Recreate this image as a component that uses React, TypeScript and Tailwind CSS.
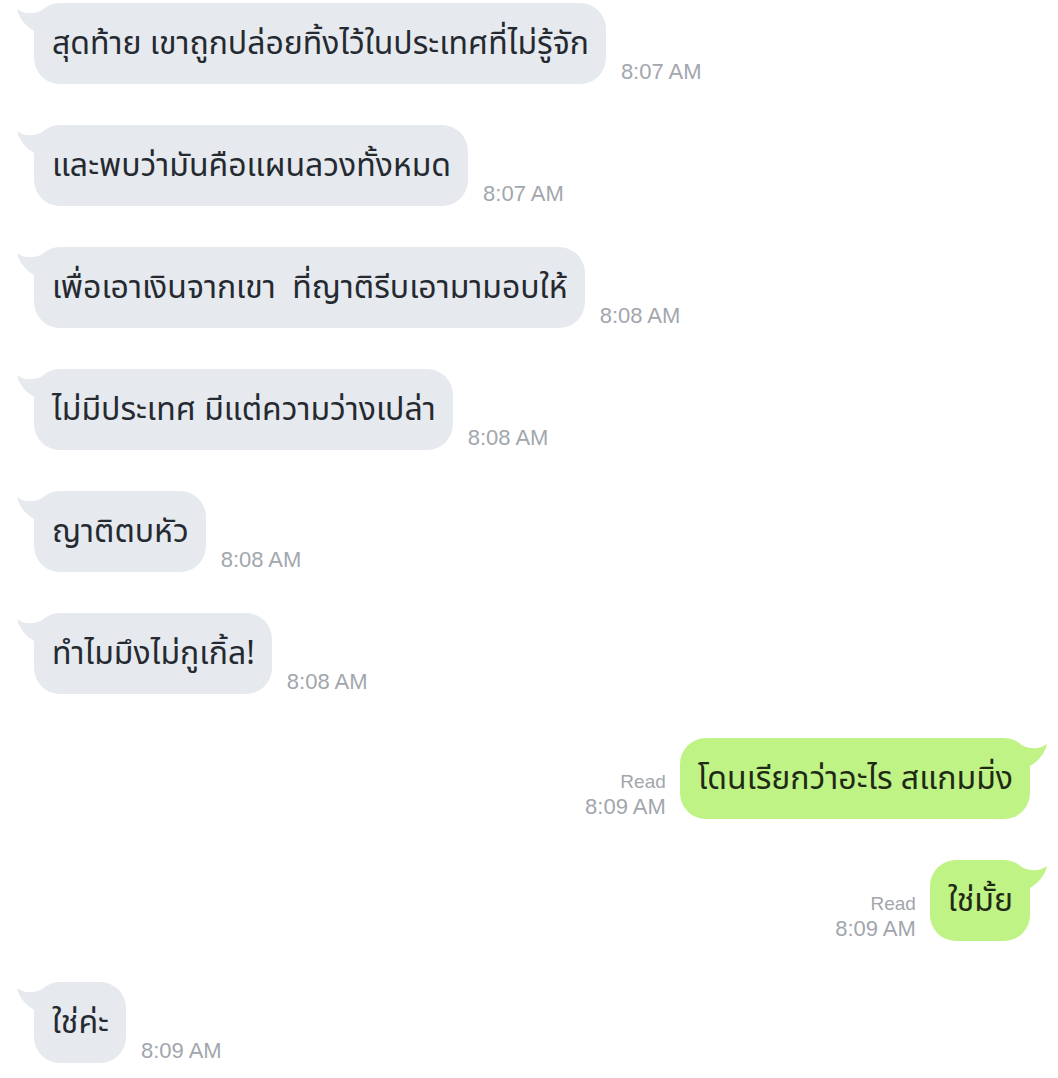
import React from "react";

type Msg = { side: "l" | "r"; text: string; time: string };

const msgs: Msg[] = [
  { side: "l", text: "สุดท้าย เขาถูกปล่อยทิ้งไว้ในประเทศที่ไม่รู้จัก", time: "8:07 AM" },
  { side: "l", text: "และพบว่ามันคือแผนลวงทั้งหมด", time: "8:07 AM" },
  { side: "l", text: "เพื่อเอาเงินจากเขา  ที่ญาติรีบเอามามอบให้", time: "8:08 AM" },
  { side: "l", text: "ไม่มีประเทศ มีแต่ความว่างเปล่า", time: "8:08 AM" },
  { side: "l", text: "ญาติตบหัว", time: "8:08 AM" },
  { side: "l", text: "ทำไมมึงไม่กูเกิ้ล!", time: "8:08 AM" },
  { side: "r", text: "โดนเรียกว่าอะไร สแกมมิ่ง", time: "8:09 AM" },
  { side: "r", text: "ใช่มั้ย", time: "8:09 AM" },
  { side: "l", text: "ใช่ค่ะ", time: "8:09 AM" },
];

function TailLeft({ color }: { color: string }) {
  return (
    <svg className="absolute left-[-17px] top-0" width="30" height="40" viewBox="0 0 30 40">
      <path d="M0 6 C 7 11, 15 12, 26 7 L 26 40 L 17 40 L 17 28 C 10 24, 2 16, 0 6 Z" fill={color} />
    </svg>
  );
}

function TailRight({ color }: { color: string }) {
  return (
    <svg className="absolute right-[-17px] top-0" width="30" height="40" viewBox="0 0 30 40">
      <path d="M30 6 C 23 11, 15 12, 4 7 L 4 40 L 13 40 L 13 28 C 20 24, 28 16, 30 6 Z" fill={color} />
    </svg>
  );
}

const thai = { fontFamily: '"Noto Sans Thai", "Noto Sans", "DejaVu Sans", sans-serif' };
const lat = { fontFamily: '"Liberation Sans", Arial, sans-serif' };

export default function App() {
  return (
    <div className="w-[1058px] h-[1078px] bg-white overflow-hidden pt-[3px] flex flex-col gap-[41px]">
      {msgs.map((m, i) =>
        m.side === "l" ? (
          <div key={i} className="flex items-end pl-[34px]">
            <div className="relative h-[81px] rounded-[26px] bg-[#e6e9ed] pl-[18px] pr-[17px] flex items-center">
              <TailLeft color="#e6e9ed" />
              <span className="relative text-[32px] leading-[40px] text-[#252a31] whitespace-pre" style={thai}>
                {m.text}
              </span>
            </div>
            <div className="ml-[15px] mb-0 text-[22px] leading-[25px] text-[#a2a6ad]" style={lat}>
              {m.time}
            </div>
          </div>
        ) : (
          <div key={i} className={`flex items-end justify-end pr-[28px] ${i === 6 ? "mt-[3px]" : ""}`}>
            <div className="mr-[14px] mb-0 flex flex-col items-end text-[19px] leading-[25px] text-[#a2a6ad]" style={lat}>
              <span>Read</span>
              <span className="text-[22px]">{m.time}</span>
            </div>
            <div className="relative h-[81px] rounded-[26px] bg-[#c0f386] pl-[18px] pr-[17px] flex items-center">
              <TailRight color="#c0f386" />
              <span className="relative text-[32px] leading-[40px] text-[#1f2a16] whitespace-pre" style={thai}>
                {m.text}
              </span>
            </div>
          </div>
        )
      )}
    </div>
  );
}
